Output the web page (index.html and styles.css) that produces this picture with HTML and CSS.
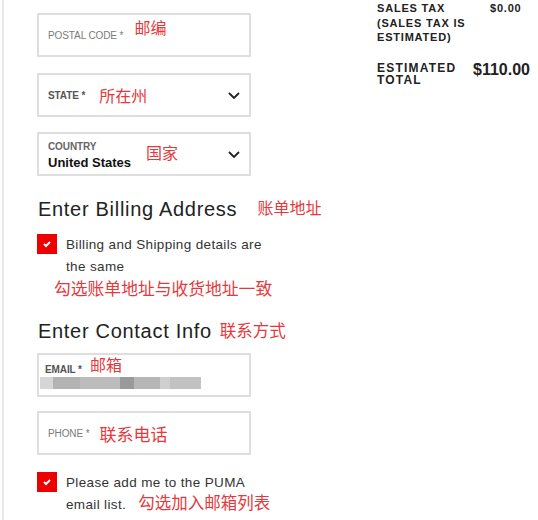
FILE: index.html
```html
<!DOCTYPE html>
<html>

<head>
    <meta charset="utf-8">
    <title>Checkout</title>

    <link rel="stylesheet" href="styles.css">
</head>

<body>
    <div class="page">
        <form class="form" action="">
            <div class="field">
                <span class="label">POSTAL CODE *</span>
                <span class="note note-up">邮编</span>
            </div>

            <div class="field">
                <span class="label label-bold">STATE *</span>
                <span class="note note-state">所在州</span>
                <svg class="chevron" width="12" height="7" viewBox="0 0 12 7">
                    <polyline points="1,1 6,6 11,1" fill="none" stroke="#222" stroke-width="1.8" />
                </svg>
            </div>

            <div class="field">
                <div class="select-value">
                    <span class="label label-country">COUNTRY</span>
                    <span class="value">United States</span>
                </div>
                <span class="note note-country">国家</span>
                <svg class="chevron" width="12" height="7" viewBox="0 0 12 7">
                    <polyline points="1,1 6,6 11,1" fill="none" stroke="#222" stroke-width="1.8" />
                </svg>
            </div>

            <h2 class="heading heading-billing">Enter Billing Address <span class="note note-heading">账单地址</span></h2>

            <div class="check-row">
                <span class="checkbox">
                    <svg width="20" height="20" viewBox="0 0 20 20">
                        <polyline points="7,10 9,12 13,8" fill="none" stroke="#fff" stroke-width="2" />
                    </svg>
                </span>
                <p class="check-text">Billing and Shipping details are the same</p>
            </div>
            <p class="note note-block">勾选账单地址与收货地址一致</p>

            <h2 class="heading heading-contact">Enter Contact Info<span class="note note-contact">联系方式</span></h2>

            <div class="field field-email">
                <div class="email-top">
                    <span class="label label-bold">EMAIL *</span>
                    <span class="note note-email">邮箱</span>
                </div>
                <div class="blurred"></div>
            </div>

            <div class="field field-phone">
                <span class="label">PHONE *</span>
                <span class="note note-phone">联系电话</span>
            </div>

            <div class="check-row check-row-last">
                <span class="checkbox">
                    <svg width="20" height="20" viewBox="0 0 20 20">
                        <polyline points="7,10 9,12 13,8" fill="none" stroke="#fff" stroke-width="2" />
                    </svg>
                </span>
                <p class="check-text">Please add me to the PUMA email list. <span class="note note-inline">勾选加入邮箱列表</span></p>
            </div>
        </form>

        <div class="summary">
            <div class="summary-row">
                <span class="summary-label">SALES TAX (SALES TAX IS ESTIMATED)</span>
                <span class="summary-value">$0.00</span>
            </div>
            <div class="summary-row summary-total">
                <span class="summary-label total-label">ESTIMATED TOTAL</span>
                <span class="total-value">$110.00</span>
            </div>
        </div>
    </div>
</body>

</html>
```

FILE: styles.css
```css
body {
    margin: 0;
    background: #fff;
    font-family: "Liberation Sans", "Noto Sans CJK SC", sans-serif;
    color: #222;
}

.page {
    display: flex;
    align-items: flex-start;
    margin-left: 2px;
    border-left: 2px solid #e8e8e8;
    min-height: 520px;
    box-sizing: border-box;
}

.form {
    width: 214px;
    margin-left: 33px;
    padding-top: 13px;
}

.field {
    display: flex;
    align-items: center;
    height: 44px;
    box-sizing: border-box;
    border: 2px solid #dedede;
    padding: 0 9px 0 9px;
    margin-bottom: 15px;
}

.field:first-child {
    margin-bottom: 16px;
}

.label {
    font-size: 10px;
    letter-spacing: -0.1px;
    color: #7a7a7a;
    white-space: nowrap;
}

.label-bold {
    font-weight: bold;
    color: #555;
}

.label-country {
    font-weight: bold;
    color: #666;
    display: block;
}

.select-value {
    display: flex;
    flex-direction: column;
    margin-top: 3px;
}

.value {
    font-size: 13px;
    font-weight: bold;
    color: #111;
    margin-top: 3px;
}

.chevron {
    margin-left: auto;
}

.note {
    font-family: "Noto Sans CJK SC", sans-serif;
    color: #e4393c;
    font-size: 16px;
    font-weight: normal;
    white-space: nowrap;
    letter-spacing: 0;
}

.note-up {
    margin-left: 11px;
    margin-bottom: 16px;
}

.note-state {
    margin-left: 14px;
}

.note-country {
    margin-left: 15px;
    margin-bottom: 4px;
}

.heading {
    font-size: 20px;
    font-weight: normal;
    line-height: 24px;
    letter-spacing: 0.7px;
    margin: 0;
    color: #222;
    white-space: nowrap;
}

.heading-billing {
    margin-top: 19px;
    margin-left: 1px;
}

.heading-contact {
    margin-top: 20px;
    margin-left: 1px;
}

.note-heading {
    font-size: 16px;
    margin-left: 14px;
    vertical-align: 2px;
}

.note-contact {
    font-size: 16.5px;
    margin-left: 8px;
    vertical-align: 1px;
}

.check-row {
    display: flex;
    align-items: flex-start;
    width: 238px;
    margin-top: 13px;
}

.check-row-last {
    margin-top: 17px;
}

.checkbox {
    flex: none;
    width: 20px;
    height: 20px;
    background: #ee0000;
    display: flex;
}

.check-text {
    margin: 0 0 0 9px;
    font-size: 13.5px;
    line-height: 22px;
    letter-spacing: 0.35px;
    color: #333;
}

.note-block {
    margin: 0;
    padding-left: 17px;
    font-size: 16.8px;
    line-height: 20px;
    margin-bottom: 0;
}

.field-email {
    display: block;
    height: 44px;
    padding: 4px 0 0 6px;
    margin-top: 10px;
}

.email-top {
    display: flex;
    align-items: center;
    height: 20px;
}

.note-email {
    margin-left: 8px;
    margin-bottom: 10px;
}

.blurred {
    width: 161px;
    height: 12px;
    margin: -2px 0 0 -5px;
    background: linear-gradient(to right,
            #d6d6d6 0, #d6d6d6 13px,
            #b3b3b3 13px, #b3b3b3 40px,
            #bcbcbc 40px, #bcbcbc 80px,
            #9a9a9a 80px, #9a9a9a 94px,
            #b6b6b6 94px, #b6b6b6 120px,
            #cfcfcf 120px, #cfcfcf 130px,
            #c2c2c2 130px, #c2c2c2 161px);
}

.field-phone {
    margin-top: -1px;
}

.note-phone {
    font-size: 17px;
    margin-left: 10px;
}

.note-inline {
    font-size: 16.5px;
    line-height: 1;
    margin-left: 8px;
    letter-spacing: 0;
}

.summary {
    margin-left: 126px;
    padding-top: 1px;
}

.summary-row {
    display: flex;
    align-items: flex-start;
}

.summary-label {
    width: 90px;
    margin-right: 23px;
    font-size: 11px;
    font-weight: bold;
    letter-spacing: 0.8px;
    line-height: 14.5px;
    color: #222;
}

.summary-value {
    font-size: 11px;
    font-weight: bold;
    letter-spacing: 0.8px;
    line-height: 14.5px;
}

.summary-total {
    margin-top: 17px;
}

.total-label {
    width: 96px;
    margin-right: 0;
    font-size: 12px;
    letter-spacing: 1.2px;
    line-height: 12px;
}

.total-value {
    font-size: 16px;
    font-weight: bold;
    line-height: 16px;
    margin-top: 0;
}
```
